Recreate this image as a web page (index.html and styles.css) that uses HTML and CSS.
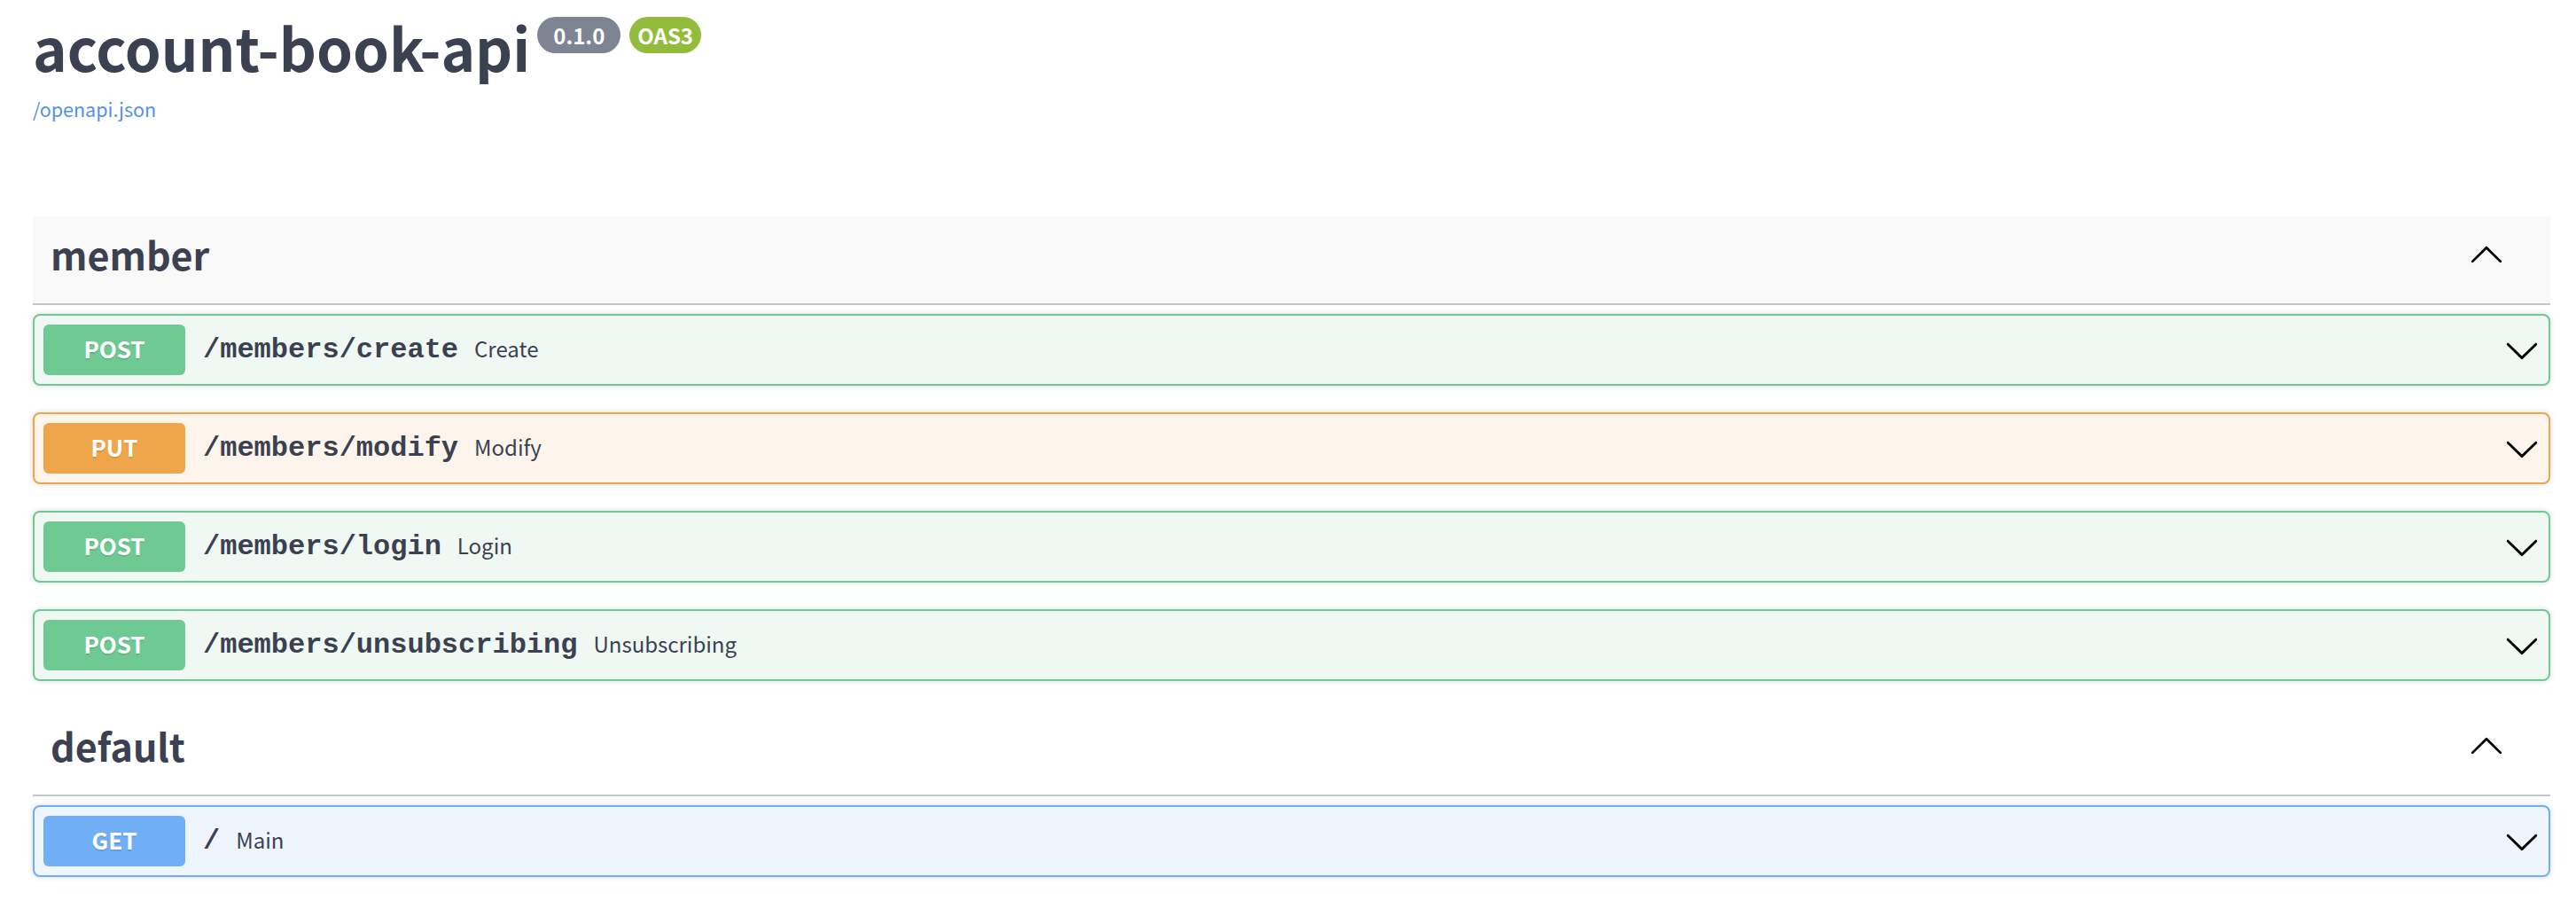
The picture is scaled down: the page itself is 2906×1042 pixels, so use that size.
FILE: index.html
```html
<!DOCTYPE html>
<html>
<head>
  <title>account-book-api</title>
  <meta name="viewport" content="width=device-width, initial-scale=1">
  <link rel="stylesheet" href="styles.css">
</head>
<body>

  <div class="wrapper">
    <div class="info">
      <h2 class="title">
        <span class="title-text">account-book-api</span>
        <span class="badge badge-version">0.1.0</span>
        <span class="badge badge-oas">OAS3</span>
      </h2>
      <a class="spec-link" href="#">/openapi.json</a>
    </div>

    <section class="tag-section">
      <h3 class="tag tag-hover">
        <span class="tag-name">member</span>
        <svg class="arrow arrow-up" viewBox="0 0 20 20">
          <path d="M17.418 14.908c.272.268.709.268.979 0s.271-.701 0-.969l-7.908-7.83a.697.697 0 0 0-.979 0l-7.908 7.83c-.27.268-.27.701 0 .969.271.268.709.268.979 0L10 7.668l7.418 7.24z"/>
        </svg>
      </h3>

      <div class="opblock opblock-post">
        <span class="method">POST</span>
        <span class="path">/members/create</span>
        <span class="desc">Create</span>
        <svg class="arrow" viewBox="0 0 20 20">
          <path d="M17.418 6.109c.272-.268.709-.268.979 0s.271.701 0 .969l-7.908 7.83c-.27.268-.707.268-.979 0l-7.908-7.83c-.27-.268-.27-.701 0-.969.271-.268.709-.268.979 0L10 13.25l7.418-7.141z"/>
        </svg>
      </div>

      <div class="opblock opblock-put">
        <span class="method">PUT</span>
        <span class="path">/members/modify</span>
        <span class="desc">Modify</span>
        <svg class="arrow" viewBox="0 0 20 20">
          <path d="M17.418 6.109c.272-.268.709-.268.979 0s.271.701 0 .969l-7.908 7.83c-.27.268-.707.268-.979 0l-7.908-7.83c-.27-.268-.27-.701 0-.969.271-.268.709-.268.979 0L10 13.25l7.418-7.141z"/>
        </svg>
      </div>

      <div class="opblock opblock-post">
        <span class="method">POST</span>
        <span class="path">/members/login</span>
        <span class="desc">Login</span>
        <svg class="arrow" viewBox="0 0 20 20">
          <path d="M17.418 6.109c.272-.268.709-.268.979 0s.271.701 0 .969l-7.908 7.83c-.27.268-.707.268-.979 0l-7.908-7.83c-.27-.268-.27-.701 0-.969.271-.268.709-.268.979 0L10 13.25l7.418-7.141z"/>
        </svg>
      </div>

      <div class="opblock opblock-post">
        <span class="method">POST</span>
        <span class="path">/members/unsubscribing</span>
        <span class="desc">Unsubscribing</span>
        <svg class="arrow" viewBox="0 0 20 20">
          <path d="M17.418 6.109c.272-.268.709-.268.979 0s.271.701 0 .969l-7.908 7.83c-.27.268-.707.268-.979 0l-7.908-7.83c-.27-.268-.27-.701 0-.969.271-.268.709-.268.979 0L10 13.25l7.418-7.141z"/>
        </svg>
      </div>
    </section>

    <section class="tag-section">
      <h3 class="tag">
        <span class="tag-name">default</span>
        <svg class="arrow arrow-up" viewBox="0 0 20 20">
          <path d="M17.418 14.908c.272.268.709.268.979 0s.271-.701 0-.969l-7.908-7.83a.697.697 0 0 0-.979 0l-7.908 7.83c-.27.268-.27.701 0 .969.271.268.709.268.979 0L10 7.668l7.418 7.24z"/>
        </svg>
      </h3>

      <div class="opblock opblock-get">
        <span class="method">GET</span>
        <span class="path">/</span>
        <span class="desc">Main</span>
        <svg class="arrow" viewBox="0 0 20 20">
          <path d="M17.418 6.109c.272-.268.709-.268.979 0s.271.701 0 .969l-7.908 7.83c-.27.268-.707.268-.979 0l-7.908-7.83c-.27-.268-.27-.701 0-.969.271-.268.709-.268.979 0L10 13.25l7.418-7.141z"/>
        </svg>
      </div>
    </section>
  </div>

</body>
</html>
```

FILE: styles.css
```css
body {
  margin: 0;
  background-color: white;
  color: #3b4151;
  font-family: "Noto Sans CJK KR", "Noto Sans", sans-serif;
}

.wrapper {
  padding: 0 29px 0 37px;
}

.info {
  margin-bottom: 104px;
}

.title {
  display: flex;
  align-items: flex-start;
  margin: 0;
  font-size: 65.5px;
  font-weight: 700;
  line-height: 106px;
  color: #3b4151;
}

.badge {
  margin-top: 19px;
  border-radius: 57px;
  color: white;
  font-size: 24px;
  font-weight: 700;
  line-height: 29px;
  padding: 6px 9px;
}

.badge-version {
  margin-left: 8px;
  padding: 6px 18px;
  background-color: #7e8492;
}

.badge-oas {
  margin-left: 10px;
  background-color: #93bc3c;
}

.spec-link {
  display: block;
  font-size: 21.5px;
  line-height: 34px;
  color: #5592e0;
  text-decoration: none;
}

.tag-section {
  margin-bottom: 30px;
}

.tag {
  display: flex;
  align-items: flex-start;
  height: 58px;
  margin: 0 0 10px;
  padding: 13px 40px 27px 20px;
  border-bottom: 2px solid #c4c5ca;
  font-size: 43px;
  font-weight: 700;
}

.tag-hover {
  background-color: #f9f9f9;
}

.tag-name {
  flex: 1;
  line-height: 58px;
}

.arrow {
  width: 40px;
  height: 40px;
  flex-shrink: 0;
}

.arrow-up {
  align-self: center;
  margin-right: 12px;
}

.opblock {
  display: flex;
  align-items: center;
  margin-bottom: 30px;
  padding: 10px;
  border: 2px solid;
  border-radius: 8px;
  box-shadow: 0 0 6px rgba(0, 0, 0, 0.15);
}

.method {
  min-width: 160px;
  padding: 10px 0 14px;
  border-radius: 6px;
  color: white;
  font-size: 26px;
  font-weight: 700;
  line-height: 33px;
  text-align: center;
  text-shadow: 0 2px 0 rgba(0, 0, 0, 0.1);
}

.path {
  padding: 0 18px 0 20px;
  font-family: "Liberation Mono", monospace;
  font-size: 32px;
  font-weight: 700;
}

.desc {
  flex: 1;
  margin-bottom: 4px;
  font-size: 24px;
}

.opblock-post {
  background-color: #eff8f3;
  border-color: #6fc993;
}

.opblock-post .method {
  background-color: #6fc993;
}

.opblock-put {
  background-color: #fdf5ec;
  border-color: #efa54a;
}

.opblock-put .method {
  background-color: #efa54a;
}

.opblock-get {
  background-color: #eff5fd;
  border-color: #70aef6;
}

.opblock-get .method {
  background-color: #70aef6;
}
```
